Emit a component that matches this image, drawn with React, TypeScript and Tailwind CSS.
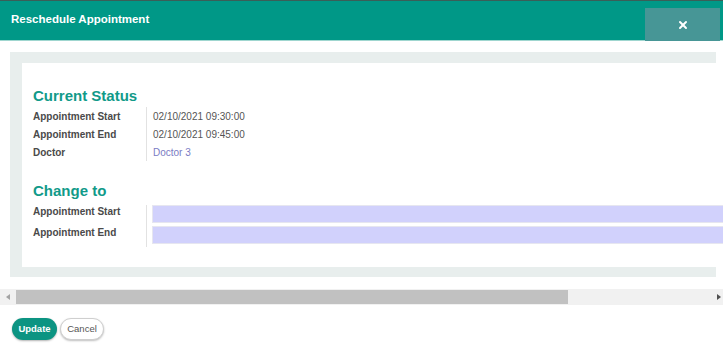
import { X } from 'lucide-react';

const font = { fontFamily: '"Liberation Sans", Arial, sans-serif' };

function Row({ label, children }: { label: string; children: React.ReactNode }) {
    return (
        <div className="flex items-center h-[18px]">
            <div className="w-[113px] shrink-0 text-[10px] font-bold text-[#4a4a4a]">{label}</div>
            <div className="border-l border-[#e2e2e2] pl-[6px] h-full flex items-center">{children}</div>
        </div>
    );
}

function InputRow({ label }: { label: string }) {
    return (
        <div className="flex items-start h-[21px]">
            <div className="w-[113px] shrink-0 text-[10px] font-bold text-[#4a4a4a] leading-[12px] pt-[1px]">{label}</div>
            <div className="border-l border-[#e2e2e2] pl-[5px] h-full flex-1">
                <div className="h-[18px] w-[580px] bg-[#d1d1fc] border border-[#e6e6f0]" />
            </div>
        </div>
    );
}

export default function App() {
    return (
        <div className="w-[723px] h-[350px] bg-white overflow-hidden relative" style={font}>
            {/* header */}
            <div className="h-[41px] bg-[#009887] border-t border-[#3a5f58] border-b border-b-[#9fd6cf] flex items-center relative">
                <span className="ml-[11px] text-[11.5px] font-bold text-white -mt-[1px]">Reschedule Appointment</span>
                <button className="absolute right-[3px] top-[7px] w-[75px] h-[33px] bg-[#479696] flex items-center justify-center">
                    <X size={12} strokeWidth={4} className="text-white" />
                </button>
            </div>

            {/* body */}
            <div className="pt-[11px] pl-[10px]">
                <div className="w-[706px] h-[225px] bg-[#e8eeed] pt-[11px] pl-[12px] pb-[10px]">
                    <div className="bg-white h-full pl-[11px] pt-[24px]">
                        <h2 className="text-[15px] font-bold text-[#119a89] leading-[18px] mb-[2px]">Current Status</h2>
                        <Row label="Appointment Start">
                            <span className="text-[10px] text-[#555]">02/10/2021 09:30:00</span>
                        </Row>
                        <Row label="Appointment End">
                            <span className="text-[10px] text-[#555]">02/10/2021 09:45:00</span>
                        </Row>
                        <Row label="Doctor">
                            <span className="text-[10px] text-[#7b7bc4]">Doctor 3</span>
                        </Row>
                        <h2 className="text-[15px] font-bold text-[#119a89] leading-[18px] mt-[21px] mb-[5px]">Change to</h2>
                        <InputRow label="Appointment Start" />
                        <InputRow label="Appointment End" />
                    </div>
                </div>
            </div>

            {/* horizontal scrollbar */}
            <div className="mt-[12px] h-[16px] bg-[#f1f1f1] flex items-center relative">
                <div className="w-[16px] flex items-center justify-center">
                    <div className="w-0 h-0 border-y-[3px] border-y-transparent border-r-[4px] border-r-[#a3a3a3]" />
                </div>
                <div className="w-[552px] h-[14px] bg-[#c1c1c1]" />
                <div className="absolute right-[2px] top-[5px] w-0 h-0 border-y-[3px] border-y-transparent border-l-[4px] border-l-[#505050]" />
            </div>

            {/* footer */}
            <div className="flex gap-[3px] pl-[12px] pt-[13px]">
                <button className="h-[22px] w-[45px] rounded-full bg-[#0c9482] text-white text-[9.5px] font-bold shadow-[0_1px_2px_rgba(0,0,0,0.3)]">Update</button>
                <button className="h-[22px] w-[44px] rounded-full bg-white border border-[#cfcfcf] text-[#555] text-[9.5px] shadow-[0_1px_2px_rgba(0,0,0,0.25)]">Cancel</button>
            </div>
        </div>
    );
}
